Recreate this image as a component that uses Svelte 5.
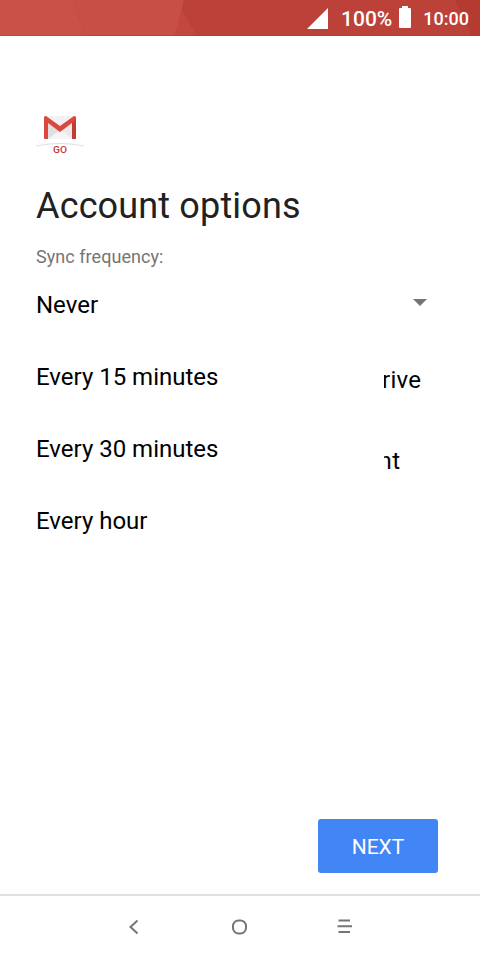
<script lang="ts">
	const frequencies: string[] = ['Never', 'Every 15 minutes', 'Every 30 minutes', 'Every hour'];
	let selected = frequencies[0];
	const settings: string[] = ['rive', 'nt'];
</script>

<div class="screen">
	<header class="status-bar">
		<svg class="backdrop" viewBox="0 0 480 36" preserveAspectRatio="none">
			<path d="M0 0H73L85 36H0z" fill="#c95147" />
			<path d="M73 0H184L175 36H85z" fill="#c74f45" />
			<path d="M184 0L182 10L197 36H175z" fill="#c2483f" />
			<path d="M184 0H480V36H197L182 10z" fill="#bc4138" />
			<path d="M455 0H480V36H472z" fill="#b53b32" />
			<path d="M0 35H480V36H0z" fill="#a8382f" opacity="0.4" />
		</svg>
		<svg class="signal" width="22" height="21" viewBox="0 0 22 21">
			<path d="M21 0V21H0z" fill="#fff" />
		</svg>
		<span class="percent">100%</span>
		<svg class="battery" width="12" height="22" viewBox="0 0 12 22">
			<path d="M3 0H9V2H11Q12 2 12 3V21Q12 22 11 22H1Q0 22 0 21V3Q0 2 1 2H3z" fill="#fff" />
		</svg>
		<span class="clock">10:00</span>
	</header>

	<main>
		<svg class="logo" width="48" height="48" viewBox="0 0 48 48">
			<path d="M8 6H40V29H8z" fill="#e9e9e9" />
			<path d="M12 29L24 18L36 29z" fill="#f5f5f5" />
			<path d="M12 11L24 20L12 29z" fill="#dfdfdf" />
			<path d="M10 6H38L24 16z" fill="#f1f1f1" />
			<path d="M8 7.5Q8 6 10 6L24 16L38 6Q40 6 40 7.5V28Q40 29 39 29H36V13L24 22L12 13V29H9Q8 29 8 28z" fill="#d9493f" />
			<path d="M36 13L40 9V28Q40 29 39 29H36z" fill="#c53a33" />
			<path d="M0 36Q24 31 48 36" fill="none" stroke="#dedede" stroke-width="1" />
			<text x="24" y="43" text-anchor="middle" textLength="14" lengthAdjust="spacingAndGlyphs">GO</text>
		</svg>
		<h1>Account options</h1>
		<p class="label">Sync frequency:</p>

		<div class="options">
			<div class="settings">
				{#each settings as setting}
					<div class="setting">{setting}</div>
				{/each}
			</div>
			<span class="caret"></span>
			<div class="menu">
				{#each frequencies as frequency}
					<button class="item" on:click={() => (selected = frequency)}>{frequency}</button>
				{/each}
			</div>
		</div>

		<button class="next">NEXT</button>
	</main>

	<nav>
		<svg width="480" height="64" viewBox="0 0 480 64" fill="none" stroke="#757575" stroke-width="2">
			<path d="M137.5 24.5L130.5 31L137.5 37.5" />
			<rect x="233" y="24.5" width="13" height="13" rx="5.5" />
			<path d="M338.5 24.5H350M337.5 30.2H352M338.5 36H350" />
		</svg>
	</nav>
</div>

<style>
	:global(body) {
		background: #fff;
	}

	.screen {
		display: flex;
		flex-direction: column;
		width: 480px;
		height: 960px;
		overflow: hidden;
		background: #fff;
		color: #000;
		font-family: Roboto, sans-serif;
	}

	.status-bar {
		position: relative;
		display: flex;
		justify-content: flex-end;
		align-items: center;
		box-sizing: border-box;
		height: 36px;
		padding-right: 11px;
		color: #fff;
		font-weight: 500;
	}

	.status-bar > :not(.backdrop) {
		position: relative;
	}

	.backdrop {
		position: absolute;
		inset: 0;
		width: 100%;
		height: 100%;
		background: #bd4138;
	}

	.signal {
		margin-right: 12px;
	}

	.percent {
		padding-top: 2px;
		font-size: 21px;
		line-height: 36px;
	}

	.battery {
		margin: 0 12px 2px 7px;
	}

	.clock {
		padding-top: 2px;
		font-size: 18px;
		line-height: 36px;
	}

	main {
		display: flex;
		flex: 1;
		flex-direction: column;
		padding: 74px 42px 21px 36px;
	}

	.logo {
		display: block;
	}

	.logo text {
		fill: #c5343c;
		font-size: 8.5px;
		font-weight: 500;
	}

	h1 {
		margin: 24px 0 0;
		color: #212121;
		font-size: 36px;
		font-weight: 400;
		line-height: 48px;
		letter-spacing: 0.15px;
	}

	.label {
		margin: 15px 0 0;
		color: #757575;
		font-size: 18px;
		line-height: 24px;
		letter-spacing: 0.05px;
	}

	.options {
		position: relative;
		flex: 1;
		font-size: 24px;
	}

	.settings {
		padding: 71px 0 0 346px;
	}

	.setting {
		height: 81px;
		line-height: 80px;
		letter-spacing: 0.3px;
	}

	.setting:last-child {
		margin-left: -3.5px;
		letter-spacing: 0.6px;
	}

	.caret {
		position: absolute;
		top: 30px;
		right: 11px;
		border: 7px solid transparent;
		border-top-color: #757575;
		border-bottom: 0;
	}

	.menu {
		position: absolute;
		top: 0;
		left: 0;
		display: flex;
		flex-direction: column;
		width: 348px;
		background: #fff;
	}

	button {
		border: none;
		font-family: inherit;
		cursor: pointer;
	}

	.item {
		height: 72px;
		padding: 0;
		background: transparent;
		color: #000;
		font-size: 24px;
		line-height: 72px;
		text-align: left;
	}

	.next {
		align-self: flex-end;
		width: 120px;
		height: 54px;
		padding: 2px 0 0;
		border-radius: 3px;
		background: #4285f4;
		color: #fff;
		font-size: 21px;
	}

	nav {
		height: 64px;
		border-top: 2px solid #e0e0e0;
	}
</style>
